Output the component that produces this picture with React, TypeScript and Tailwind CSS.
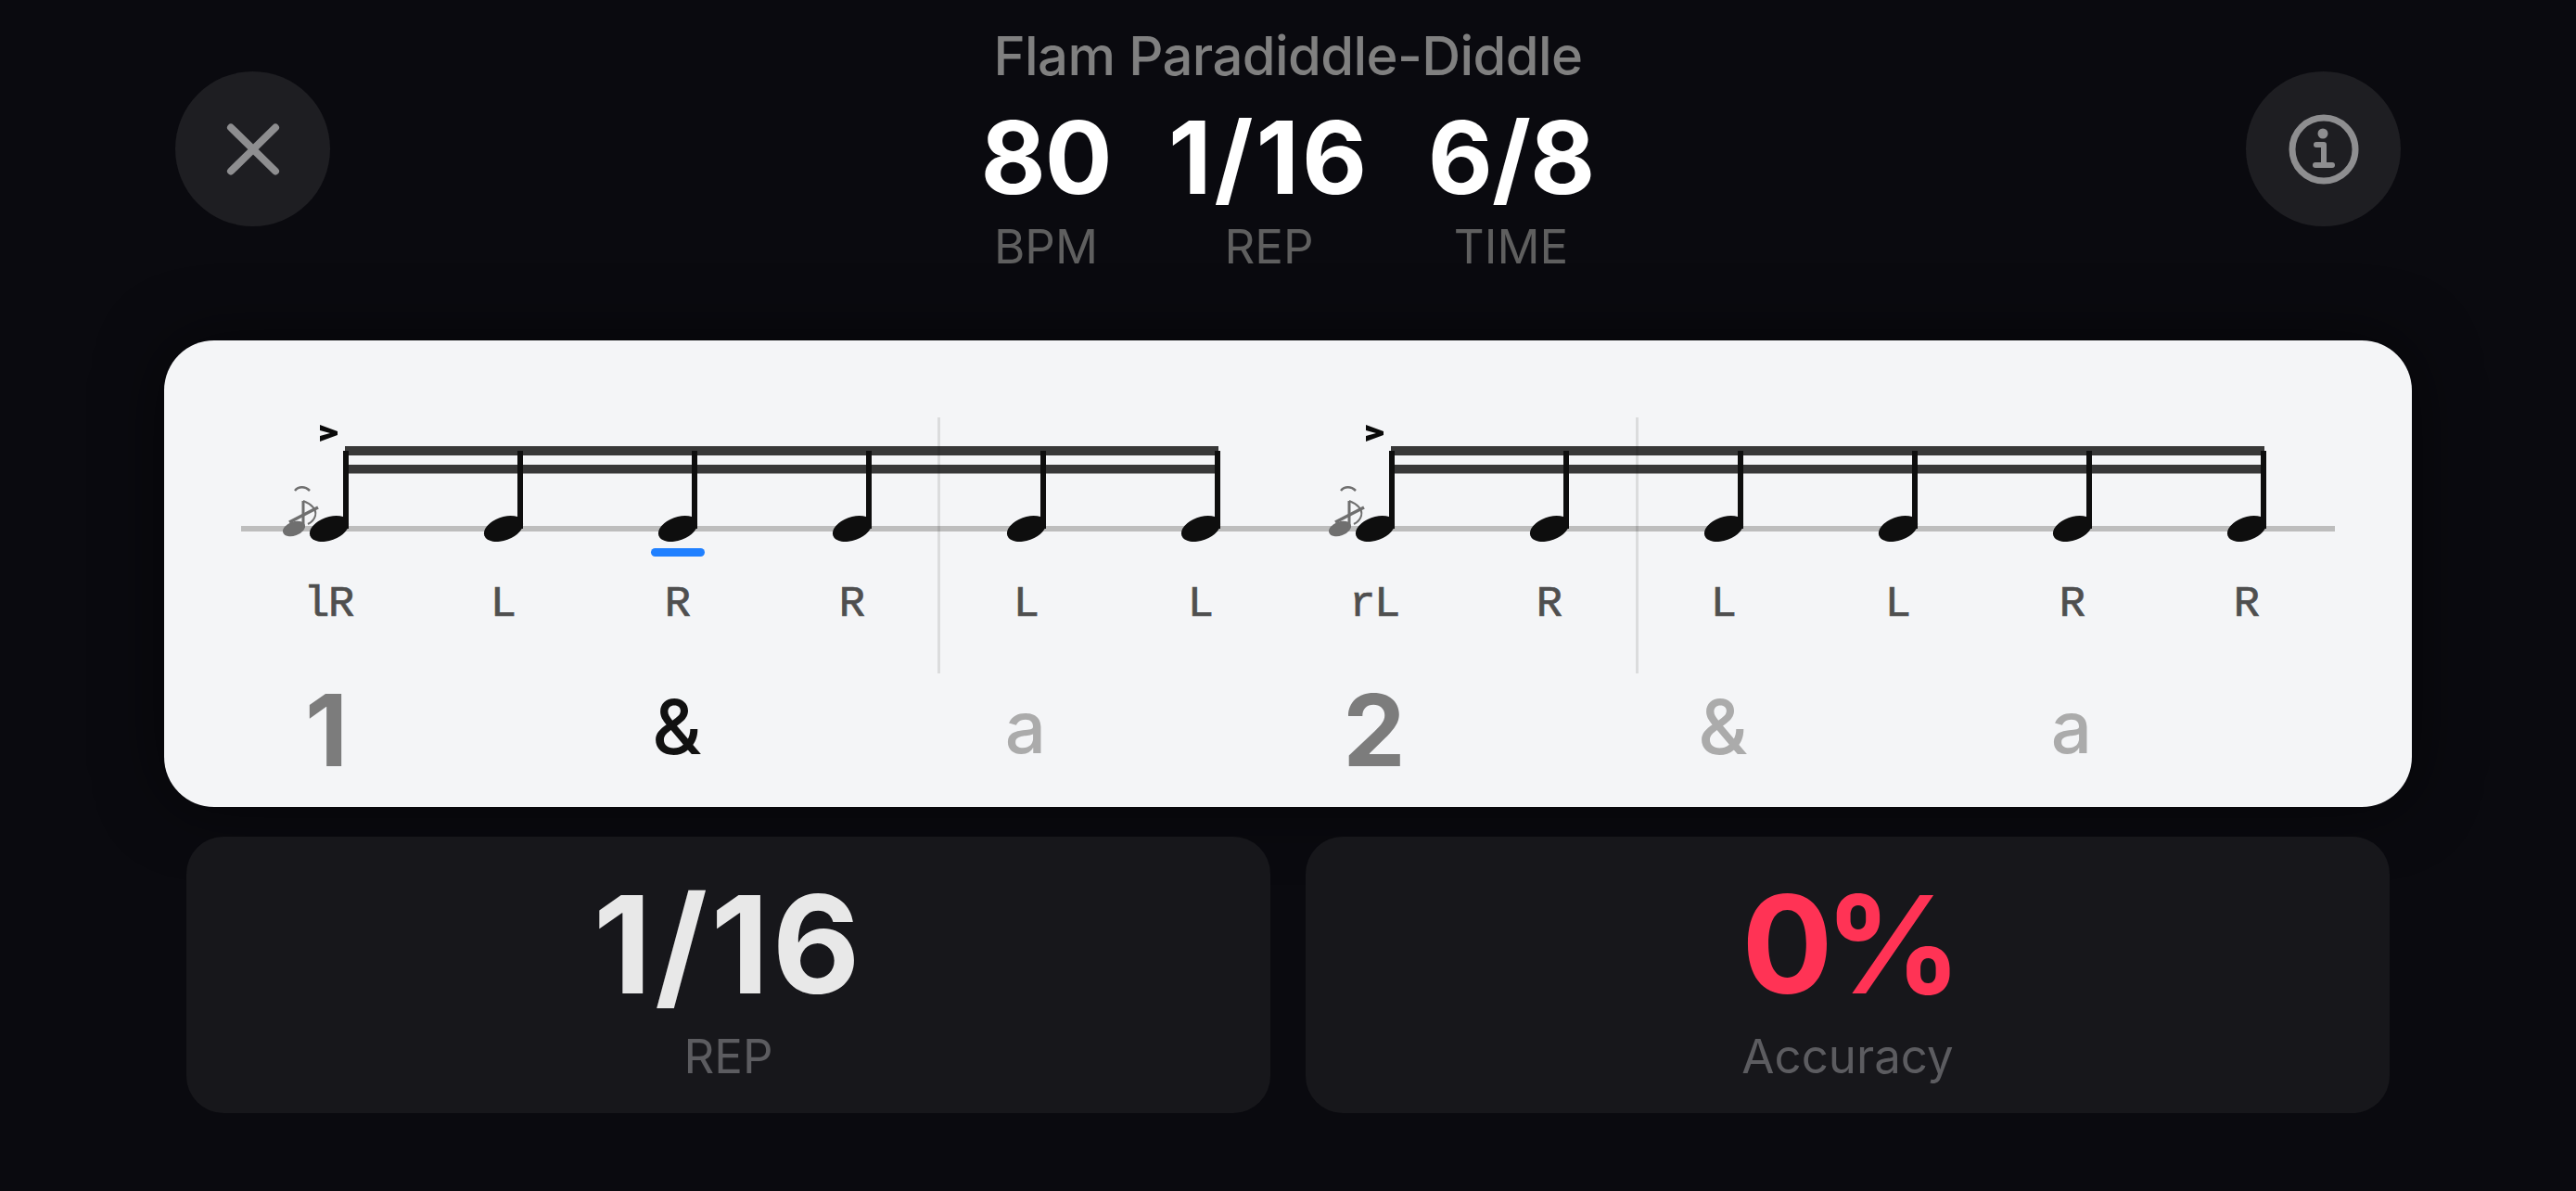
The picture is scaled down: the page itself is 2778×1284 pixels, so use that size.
const sticking = ["lR", "L", "R", "R", "L", "L", "rL", "R", "L", "L", "R", "R"]
const noteX = sticking.map((_, i) => 355 + i * 188)

const counts = [
  { label: "1", col: "col-start-1", cls: "text-[107px] font-bold text-[#7c7c7c] -translate-x-[2px]" },
  { label: "&", col: "col-start-3", cls: "text-[82px] font-medium text-[#111111] -translate-y-[3px]" },
  { label: "a", col: "col-start-5", cls: "text-[78px] font-medium text-[#ababab] -translate-y-[3px]" },
  { label: "2", col: "col-start-7", cls: "text-[107px] font-bold text-[#7c7c7c]" },
  { label: "&", col: "col-start-9", cls: "text-[82px] font-medium text-[#ababab] -translate-y-[3px]" },
  { label: "a", col: "col-start-11", cls: "text-[78px] font-medium text-[#ababab] -translate-y-[3px]" },
]

const Flam = ({ x }: { x: number }) => (
  <g transform={`translate(${x} 0)`} fill="none" stroke="#6f6f6f">
    <ellipse cx={-38} cy={570} rx={12.5} ry={7.5} transform="rotate(-20 -38 570)" fill="#6f6f6f" stroke="none" />
    <path d="M-28 569V540" strokeWidth={3} />
    <path d="M-28 540C-20 543 -13 549 -15 556C-16 560 -19 563 -23 565" strokeWidth={2} />
    <path d="M-43 563L-12 547" strokeWidth={3.5} />
    <path d="M-37 529C-33 524 -26 524 -21 529" strokeWidth={2.5} />
  </g>
)

const Staff = () => (
  <svg width={2258} height={170} viewBox="260 450 2258 170" className="block">
    <rect x={260} y={567} width={2258} height={6} fill="#bdbdbd" />
    {[372, 1500].map((x) => (
      <g key={x} fill="#383838">
        <rect x={x} y={481} width={942} height={10} />
        <rect x={x} y={501} width={942} height={9.5} />
      </g>
    ))}
    {[0, 6].map((i) => (
      <g key={i}>
        <Flam x={noteX[i]} />
        <polygon
          transform={`translate(${noteX[i]} 0)`}
          points="-10,458 9,465 9,469 -10,476 -10,470 1,467 -10,464"
          fill="#0a0a0a"
        />
      </g>
    ))}
    {noteX.map((x) => (
      <g key={x} fill="#0e0e0e">
        <rect x={x + 15} y={486} width={6} height={84} />
        <ellipse cx={x} cy={570} rx={22} ry={12.5} transform={`rotate(-20 ${x} 570)`} />
      </g>
    ))}
    <rect x={702} y={591} width={58} height={9} rx={4.5} fill="#2080ff" />
  </svg>
)

const HeaderStat = ({ value, label, width, spacing }: { value: string; label: string; width: string; spacing: string }) => (
  <div className={`flex flex-col items-center ${width}`}>
    <span className={`text-[108px] leading-[108px] font-bold text-white whitespace-nowrap ${spacing}`}>{value}</span>
    <span className="mt-[12px] text-[51px] leading-[60px] text-[#5f5f5f]">{label}</span>
  </div>
)

const ResultCard = ({ value, label, color }: { value: string; label: string; color: string }) => (
  <div className="w-[1169px] h-[298px] rounded-[40px] bg-[#17171b] flex flex-col items-center pt-[44px]">
    <span className={`leading-[145px] font-bold ${color}`}>{value}</span>
    <span className="mt-[18px] text-[51px] leading-[60px] text-[#5c5c60]">{label}</span>
  </div>
)

export default function App() {
  return (
    <div className="h-screen w-full overflow-hidden bg-[#0a0a0f] flex flex-col items-center font-['Inter',sans-serif]">
      {/* Header */}
      <div className="w-[2400px] h-[367px] flex justify-between items-start">
        <button className="mt-[77px] w-[167px] h-[167px] rounded-full bg-[#1e1e22] flex items-center justify-center">
          <svg width={64} height={64} viewBox="0 0 64 64" fill="none" stroke="#8e8e90" strokeWidth={8} strokeLinecap="round">
            <path d="M8 8.5L56 55.5M56 8.5L8 55.5" />
          </svg>
        </button>
        <div className="flex flex-col items-center">
          <h1 className="mt-[25px] text-[58px] leading-[70px] font-medium tracking-[-0.6px] text-[#808080] whitespace-nowrap">Flam Paradiddle-Diddle</h1>
          <div className="mt-[21px] flex gap-[68px]">
            <HeaderStat value="80" label="BPM" width="w-[134px]" spacing="tracking-[-1px]" />
            <HeaderStat value="1/16" label="REP" width="w-[211px]" spacing="tracking-[3px]" />
            <HeaderStat value="6/8" label="TIME" width="w-[175px]" spacing="tracking-[-1px]" />
          </div>
        </div>
        <button className="mt-[77px] w-[167px] h-[167px] rounded-full bg-[#1e1e22] flex items-center justify-center">
          <svg width={76} height={76} viewBox="0 0 76 76" fill="none" stroke="#8e8e90">
            <circle cx={38} cy={38} r={34} strokeWidth={7} />
            <circle cx={37} cy={21} r={5.5} fill="#8e8e90" stroke="none" />
            <path d="M30 33H38V54" strokeWidth={6} strokeLinecap="round" strokeLinejoin="round" />
            <path d="M29 55H47" strokeWidth={6} strokeLinecap="round" />
          </svg>
        </button>
      </div>

      {/* Notation card */}
      <div className="w-[2424px] h-[503px] rounded-[54px] bg-[#f4f5f7] shadow-[0_0_70px_rgba(0,0,0,0.55)] pl-[83px] pt-[83px]">
        <div className="relative w-[2256px]">
          <div className="absolute left-[751px] top-0 w-[3px] h-[276px] bg-black/10" />
          <div className="absolute left-[1504px] top-0 w-[3px] h-[276px] bg-black/10" />
          <Staff />
          <div className="grid grid-cols-[repeat(12,188px)] h-[55px] items-center">
            {sticking.map((s, i) => (
              <span key={i} className="translate-y-[4px] text-center text-[47px] leading-[55px] tracking-[-1.5px] text-[#4f4f4f] [-webkit-text-stroke:0.7px_#4f4f4f] font-['Liberation_Mono',monospace]">
                {s}
              </span>
            ))}
          </div>
        </div>
        <div className="mt-[57px] w-[2256px] grid grid-cols-[repeat(12,188px)] h-[110px] items-center">
          {counts.map((c) => (
            <span key={c.col} className={`${c.col} text-center leading-[110px] ${c.cls}`}>
              {c.label}
            </span>
          ))}
        </div>
      </div>

      {/* Results */}
      <div className="mt-[32px] flex gap-[38px]">
        <ResultCard value="1/16" label="REP" color="text-[146px] tracking-[3.5px] text-[#e8e8e8]" />
        <ResultCard value="0%" label="Accuracy" color="text-[146px] tracking-[-9px] text-[#ff3355]" />
      </div>
    </div>
  )
}
